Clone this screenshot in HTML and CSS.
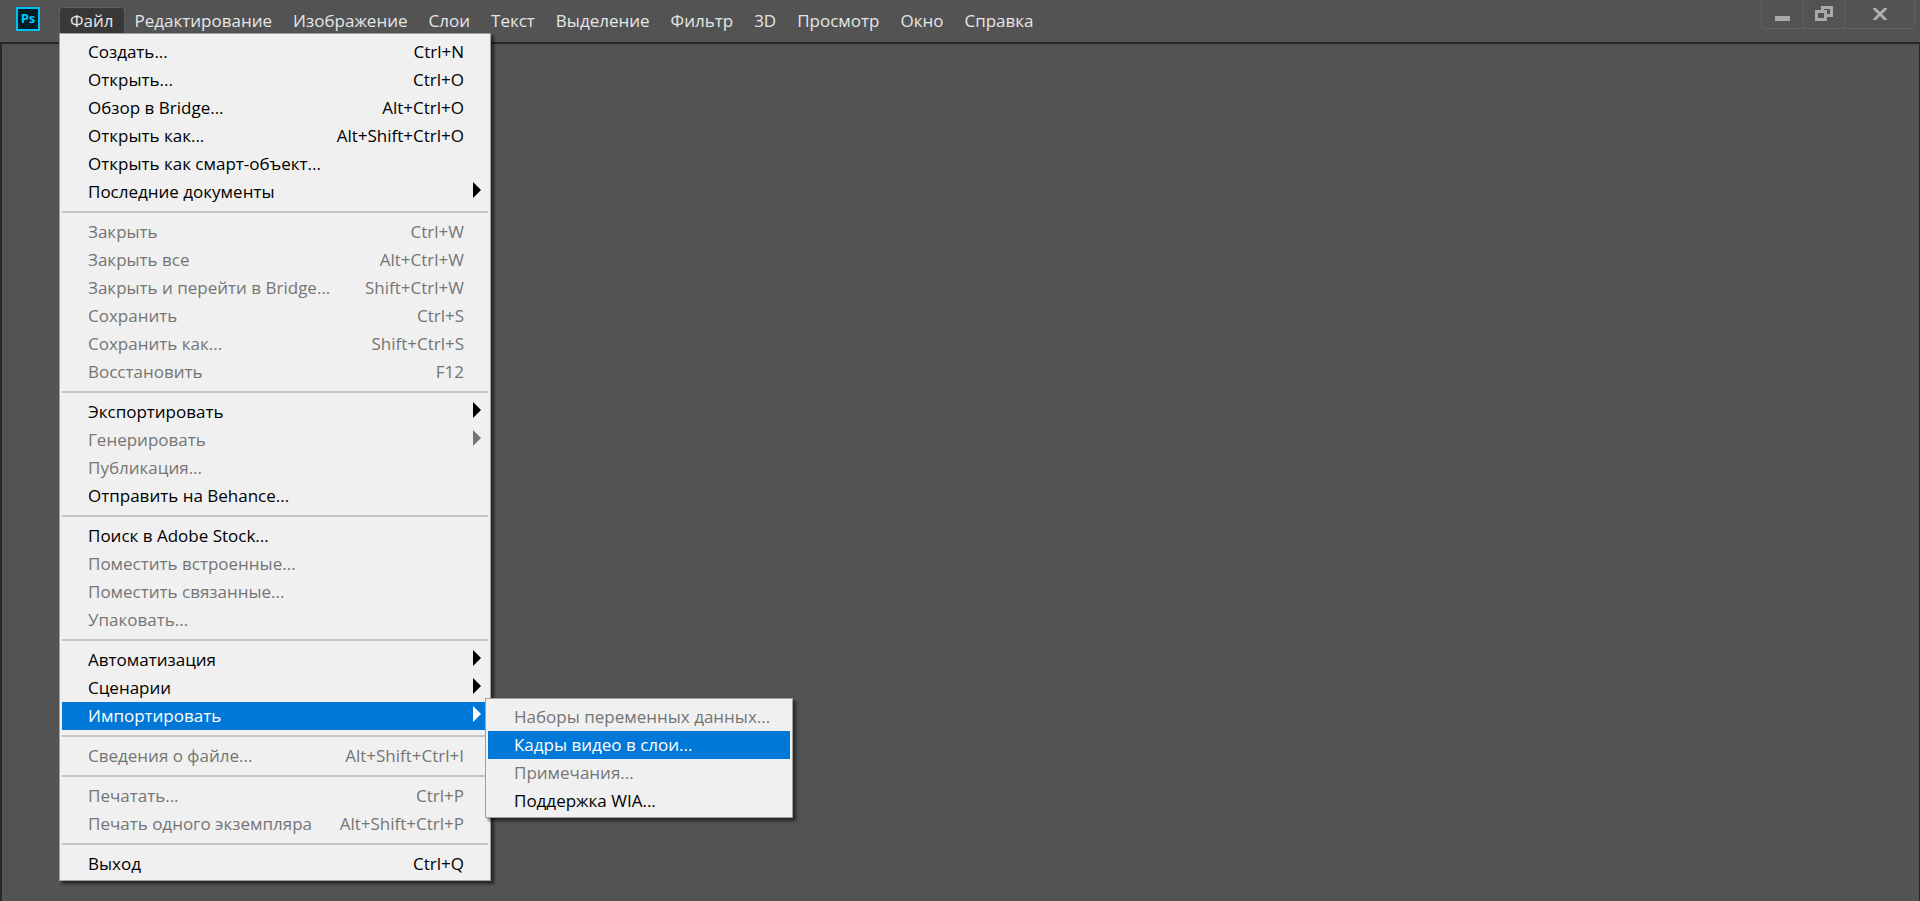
FILE: index.html
```html
<!DOCTYPE html>
<html lang="ru">
<head>
<meta charset="utf-8">
<title>Photoshop</title>
<link rel="stylesheet" href="styles.css">
</head>
<body>
<header class="titlebar">
  <svg class="logo" viewBox="0 0 24 24" role="img" aria-label="Ps">
    <rect x="1" y="1" width="22" height="22" fill="#001d26" stroke="#00c0f3" stroke-width="2"/>
    <text class="logo-text" x="12" y="16" text-anchor="middle">Ps</text>
  </svg>
  <nav class="menubar">
    <div class="menubar-entry">
      <button class="menubar-item open" aria-expanded="true">Файл</button>
      <div class="menu file-menu">
        <button class="item"><span>Создать...</span><span>Ctrl+N</span></button>
        <button class="item"><span>Открыть...</span><span>Ctrl+O</span></button>
        <button class="item"><span>Обзор в Bridge...</span><span>Alt+Ctrl+O</span></button>
        <button class="item"><span>Открыть как...</span><span>Alt+Shift+Ctrl+O</span></button>
        <button class="item"><span>Открыть как смарт-объект...</span></button>
        <button class="item parent"><span>Последние документы</span></button>
        <hr class="separator">
        <button class="item" disabled><span>Закрыть</span><span>Ctrl+W</span></button>
        <button class="item" disabled><span>Закрыть все</span><span>Alt+Ctrl+W</span></button>
        <button class="item" disabled><span>Закрыть и перейти в Bridge...</span><span>Shift+Ctrl+W</span></button>
        <button class="item" disabled><span>Сохранить</span><span>Ctrl+S</span></button>
        <button class="item" disabled><span>Сохранить как...</span><span>Shift+Ctrl+S</span></button>
        <button class="item" disabled><span>Восстановить</span><span>F12</span></button>
        <hr class="separator">
        <button class="item parent"><span>Экспортировать</span></button>
        <button class="item parent" disabled><span>Генерировать</span></button>
        <button class="item" disabled><span>Публикация...</span></button>
        <button class="item"><span>Отправить на Behance...</span></button>
        <hr class="separator">
        <button class="item"><span>Поиск в Adobe Stock...</span></button>
        <button class="item" disabled><span>Поместить встроенные...</span></button>
        <button class="item" disabled><span>Поместить связанные...</span></button>
        <button class="item" disabled><span>Упаковать...</span></button>
        <hr class="separator">
        <button class="item parent"><span>Автоматизация</span></button>
        <button class="item parent"><span>Сценарии</span></button>
        <div class="submenu-entry">
          <button class="item parent selected" aria-expanded="true"><span>Импортировать</span></button>
          <div class="menu submenu">
            <button class="item" disabled><span>Наборы переменных данных...</span></button>
            <button class="item selected"><span>Кадры видео в слои...</span></button>
            <button class="item" disabled><span>Примечания...</span></button>
            <button class="item"><span>Поддержка WIA...</span></button>
          </div>
        </div>
        <hr class="separator">
        <button class="item" disabled><span>Сведения о файле...</span><span>Alt+Shift+Ctrl+I</span></button>
        <hr class="separator">
        <button class="item" disabled><span>Печатать...</span><span>Ctrl+P</span></button>
        <button class="item" disabled><span>Печать одного экземпляра</span><span>Alt+Shift+Ctrl+P</span></button>
        <hr class="separator">
        <button class="item"><span>Выход</span><span>Ctrl+Q</span></button>
      </div>
    </div>
    <button class="menubar-item">Редактирование</button>
    <button class="menubar-item">Изображение</button>
    <button class="menubar-item">Слои</button>
    <button class="menubar-item">Текст</button>
    <button class="menubar-item">Выделение</button>
    <button class="menubar-item">Фильтр</button>
    <button class="menubar-item">3D</button>
    <button class="menubar-item">Просмотр</button>
    <button class="menubar-item">Окно</button>
    <button class="menubar-item">Справка</button>
  </nav>
  <div class="window-controls">
    <button class="control" aria-label="Свернуть">
      <svg width="16" height="16" viewBox="0 0 16 16"><path d="M0 10h15v5H0z" fill="#a9a9a9"/></svg>
    </button>
    <button class="control" aria-label="Восстановить размер">
      <svg width="18" height="16" viewBox="0 0 18 16"><path d="M7.500 6V1.500h9v8H11M1.500 5.500h9v8h-9z" fill="none" stroke="#a9a9a9" stroke-width="3"/></svg>
    </button>
    <button class="control control-close" aria-label="Закрыть окно">
      <svg width="16" height="14" viewBox="0 0 16 14"><path d="M1 1h3l4 4 4-4h3v1l-5 5 5 5v1h-3L8 9l-4 4H1v-1l5-5-5-5z" fill="#b0b0b0"/></svg>
    </button>
  </div>
</header>
<main class="workspace"></main>
</body>
</html>
```
FILE: styles.css
```css
* {
  box-sizing: border-box;
}

body {
  margin: 0;
  min-height: 100vh;
  display: flex;
  flex-direction: column;
  background: #535353;
  font-family: "Segoe UI", "Open Sans", "Noto Sans", sans-serif;
  font-size: 17px;
  line-height: 24px;
}

button {
  margin: 0;
  border: 0;
  background: none;
  font: inherit;
  color: inherit;
}

.titlebar {
  display: flex;
  align-items: flex-start;
  height: 42px;
  padding: 0 5px 0 16px;
}

.logo {
  width: 24px;
  height: 24px;
  margin: 7px 20px 0 0;
}

.logo-text {
  font-family: "Open Sans", sans-serif;
  font-size: 13px;
  font-weight: 700;
  fill: #00c8ff;
}

.menubar {
  display: flex;
  gap: 1px;
  padding-top: 8px;
  color: #e6e6e6;
}

.menubar-entry {
  position: relative;
}

.menubar-item {
  display: block;
  height: 25px;
  padding: 0 10px;
}

.menubar-item.open {
  background: #383838;
  border-radius: 3px 3px 0 0;
  box-shadow: 0 0 0 1px #5e5e5e;
}

.menu {
  position: absolute;
  z-index: 1;
  padding: 4px 2px 2px;
  border: 1px solid #a0a0a0;
  background: #f0f0f0;
  box-shadow: 3px 3px 3px rgba(0, 0, 0, 0.55);
  color: #000;
}

.file-menu {
  top: 100%;
  left: -1px;
  width: 432px;
}

.submenu-entry {
  position: relative;
}

.submenu {
  top: -4px;
  right: -305px;
  width: 308px;
}

.item {
  display: flex;
  justify-content: space-between;
  align-items: center;
  position: relative;
  width: 100%;
  height: 28px;
  padding: 0 24px 0 26px;
  white-space: nowrap;
}

.item:disabled {
  color: #757575;
}

.item.selected {
  background: #0078d7;
  color: #fff;
}

.parent::after {
  content: "";
  position: absolute;
  top: 4px;
  right: 7px;
  width: 8px;
  height: 16px;
  background: currentColor;
  clip-path: polygon(0 0, 100% 50%, 0 100%);
}

.separator {
  height: 2px;
  margin: 5px 0;
  border: 0;
  background: #c4c4c4;
}

.window-controls {
  display: flex;
  margin-left: auto;
  border: solid #606060;
  border-width: 0 1px 1px;
  border-radius: 0 0 4px 4px;
}

.control {
  display: flex;
  justify-content: center;
  align-items: center;
  width: 41px;
  height: 28px;
  padding: 0;
}

.control + .control {
  border-left: 1px solid #606060;
}

.control-close {
  width: 70px;
}

.workspace {
  flex: 1;
  border: solid #282828;
  border-width: 2px 1px 0 2px;
}
```
